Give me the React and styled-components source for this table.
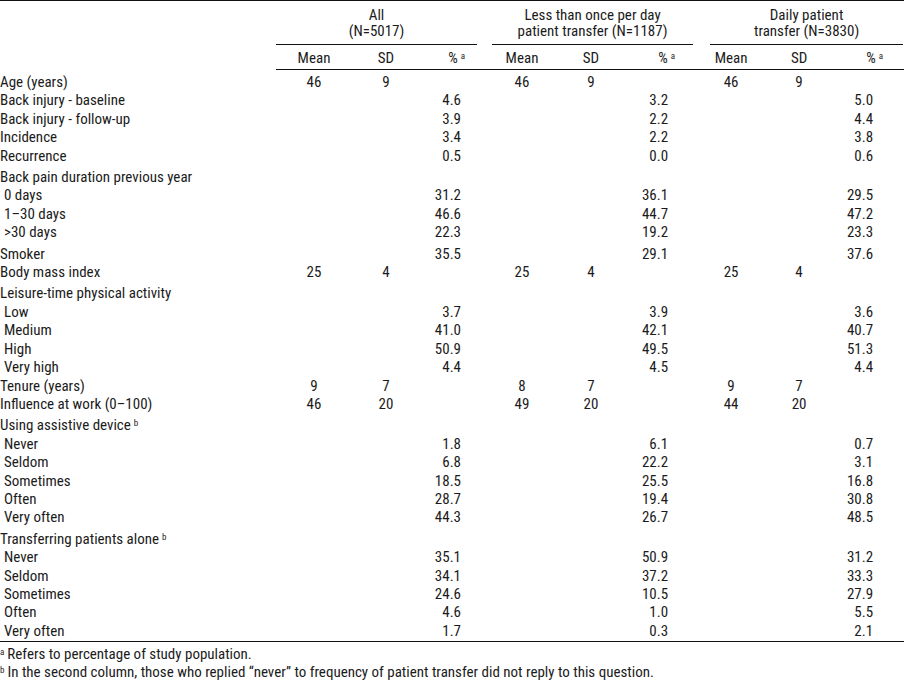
import React from 'react'
import styled, { createGlobalStyle } from 'styled-components'

let GlobalStyle = createGlobalStyle`
  body {
    margin: 0;
    background: #fff;
    color: #1b1b1b;
    font-family: Roboto, "Liberation Sans", sans-serif;
    font-stretch: 75%;
    font-size: 15px;
  }
`

let Page = styled.div`
  width: 904px;
`

let Table = styled.table`
  width: 904px;
  table-layout: fixed;
  border-collapse: separate;
  border-spacing: 0;
  border-top: 1px solid #111;
  font-size: 15px;
`

let Col = styled.col`
  width: ${p => p.$w}px;
`

let GroupHead = styled.th`
  font-weight: normal;
  padding: 6px 0 0 0;
  vertical-align: top;
`

let GroupTitle = styled.div`
  margin: 0 ${p => p.$mr}px 0 ${p => p.$ml}px;
  padding-bottom: 5px;
  line-height: 16px;
  text-align: center;
  border-bottom: 1px solid #111;
`

let SubHead = styled.th`
  font-weight: normal;
  line-height: 18px;
  padding: 4px ${p => p.$pr || 0}px 2px 0;
  text-align: ${p => p.$align};
  border-bottom: 1px solid #111;
`

let Sup = styled.sup`
  font-size: 9px;
  vertical-align: 4px;
  line-height: 0;
  margin-left: 3px;
`

let Row = styled.tr`
  & > td {
    padding-top: ${p => (p.$first ? 3 : p.$section ? 3 : 0)}px;
    padding-bottom: 0;
  }
  &:last-child > td {
    border-bottom: 1px solid #111;
    padding-bottom: 1px;
  }
`

let Label = styled.td`
  line-height: 18.4px;
  padding-left: ${p => (p.$sub ? 4 : 0)}px;
  padding-right: 0;
  white-space: nowrap;
`

let Value = styled.td`
  line-height: 18.4px;
  text-align: ${p => p.$align};
  padding-left: 0;
  padding-right: ${p => p.$pr || 0}px;
`

let Notes = styled.div`
  padding-top: 3px;
  line-height: 18px;
`

let Note = styled.div`
  white-space: nowrap;
`

let NoteMark = styled.span`
  font-size: 9px;
  vertical-align: 4px;
  line-height: 0;
  margin-right: 3px;
`

let widths = [276, 76, 68, 64, 76, 62, 80, 58, 78, 66]
let pctPad = [23, 34, 31]
let pctHeadPad = [19, 27, 21]

let groups = [
  { title: ['All', '(N=5017)'], ml: 0, mr: 7 },
  { title: ['Less than once per day', 'patient transfer (N=1187)'], ml: 8, mr: 9 },
  { title: ['Daily patient', 'transfer (N=3830)'], ml: 8, mr: 1 },
]

let rows = [
  { label: 'Age (years)', m: [['46', '9'], ['46', '9'], ['46', '9']] },
  { label: 'Back injury - baseline', p: ['4.6', '3.2', '5.0'] },
  { label: 'Back injury - follow-up', p: ['3.9', '2.2', '4.4'] },
  { label: 'Incidence', p: ['3.4', '2.2', '3.8'] },
  { label: 'Recurrence', p: ['0.5', '0.0', '0.6'] },
  { label: 'Back pain duration previous year', section: true },
  { label: '0 days', sub: true, p: ['31.2', '36.1', '29.5'] },
  { label: '1–30 days', sub: true, p: ['46.6', '44.7', '47.2'] },
  { label: '>30 days', sub: true, p: ['22.3', '19.2', '23.3'] },
  { label: 'Smoker', section: true, p: ['35.5', '29.1', '37.6'] },
  { label: 'Body mass index', m: [['25', '4'], ['25', '4'], ['25', '4']] },
  { label: 'Leisure-time physical activity', section: true },
  { label: 'Low', sub: true, p: ['3.7', '3.9', '3.6'] },
  { label: 'Medium', sub: true, p: ['41.0', '42.1', '40.7'] },
  { label: 'High', sub: true, p: ['50.9', '49.5', '51.3'] },
  { label: 'Very high', sub: true, p: ['4.4', '4.5', '4.4'] },
  { label: 'Tenure (years)', m: [['9', '7'], ['8', '7'], ['9', '7']] },
  { label: 'Influence at work (0–100)', m: [['46', '20'], ['49', '20'], ['44', '20']] },
  { label: 'Using assistive device', note: 'b', section: true },
  { label: 'Never', sub: true, p: ['1.8', '6.1', '0.7'] },
  { label: 'Seldom', sub: true, p: ['6.8', '22.2', '3.1'] },
  { label: 'Sometimes', sub: true, p: ['18.5', '25.5', '16.8'] },
  { label: 'Often', sub: true, p: ['28.7', '19.4', '30.8'] },
  { label: 'Very often', sub: true, p: ['44.3', '26.7', '48.5'] },
  { label: 'Transferring patients alone', note: 'b', section: true },
  { label: 'Never', sub: true, p: ['35.1', '50.9', '31.2'] },
  { label: 'Seldom', sub: true, p: ['34.1', '37.2', '33.3'] },
  { label: 'Sometimes', sub: true, p: ['24.6', '10.5', '27.9'] },
  { label: 'Often', sub: true, p: ['4.6', '1.0', '5.5'] },
  { label: 'Very often', sub: true, p: ['1.7', '0.3', '2.1'] },
]

let App = () => {
  return (
    <Page>
      <GlobalStyle />
      <Table>
        <colgroup>
          {widths.map((w, i) => <Col key={i} $w={w} />)}
        </colgroup>
        <thead>
          <tr>
            <th rowSpan={2} />
            {groups.map((g, i) =>
              <GroupHead key={i} colSpan={3}>
                <GroupTitle $ml={g.ml} $mr={g.mr}>
                  {g.title[0]}<br />{g.title[1]}
                </GroupTitle>
              </GroupHead>
            )}
          </tr>
          <tr>
            {groups.map((g, i) =>
              <React.Fragment key={i}>
                <SubHead $align='center'>Mean</SubHead>
                <SubHead $align='center'>SD</SubHead>
                <SubHead $align='right' $pr={pctHeadPad[i]}>%<Sup>a</Sup></SubHead>
              </React.Fragment>
            )}
          </tr>
        </thead>
        <tbody>
          {rows.map((r, i) =>
            <Row key={i} $first={i === 0} $section={r.section}>
              <Label $sub={r.sub}>
                {r.label}{r.note ? <Sup>{r.note}</Sup> : null}
              </Label>
              {[0, 1, 2].map(g =>
                <React.Fragment key={g}>
                  <Value $align='center'>{r.m ? r.m[g][0] : ''}</Value>
                  <Value $align='center'>{r.m ? r.m[g][1] : ''}</Value>
                  <Value $align='right' $pr={pctPad[g]}>{r.p ? r.p[g] : ''}</Value>
                </React.Fragment>
              )}
            </Row>
          )}
        </tbody>
      </Table>
      <Notes>
        <Note><NoteMark>a</NoteMark>Refers to percentage of study population.</Note>
        <Note>
          <NoteMark>b</NoteMark>In the second column, those who replied “never” to frequency of patient transfer did not reply to this question.
        </Note>
      </Notes>
    </Page>
  )
}

export default App
